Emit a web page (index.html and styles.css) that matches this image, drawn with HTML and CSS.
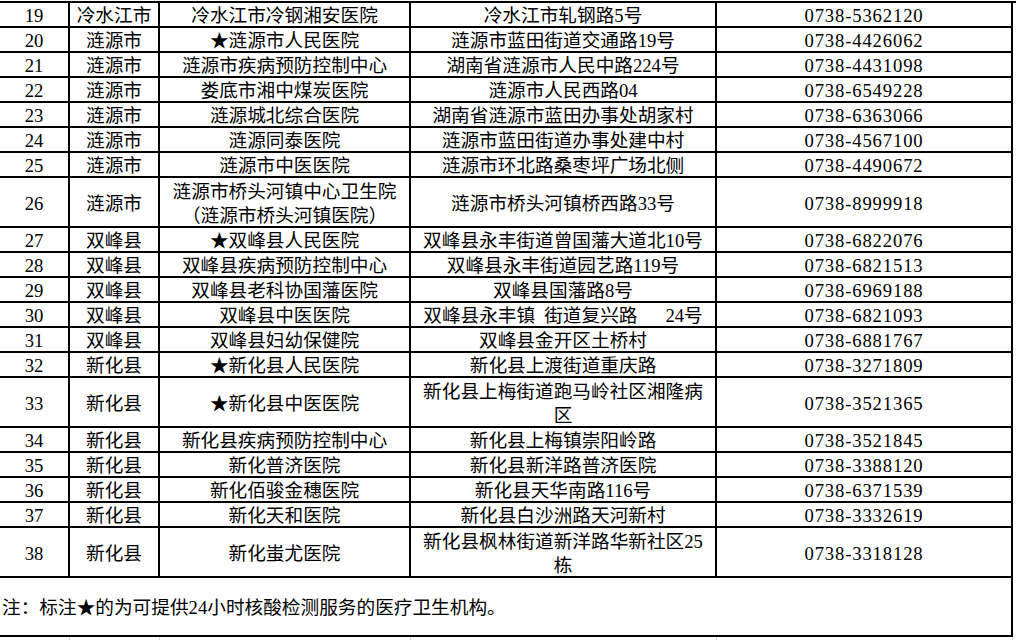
FILE: index.html
```html
<!DOCTYPE html>
<html lang="zh-CN">
<head>
<meta charset="utf-8">
<title>医疗机构名单</title>
<link rel="stylesheet" href="styles.css">
</head>
<body>
<div class="sheet">
  <div class="grid">
    <div class="c n">19</div><div class="c">冷水江市</div><div class="c">冷水江市冷钢湘安医院</div><div class="c">冷水江市轧钢路5号</div><div class="c p">0738-5362120</div>
    <div class="c n">20</div><div class="c">涟源市</div><div class="c">★涟源市人民医院</div><div class="c">涟源市蓝田街道交通路19号</div><div class="c p">0738-4426062</div>
    <div class="c n">21</div><div class="c">涟源市</div><div class="c">涟源市疾病预防控制中心</div><div class="c">湖南省涟源市人民中路224号</div><div class="c p">0738-4431098</div>
    <div class="c n">22</div><div class="c">涟源市</div><div class="c">娄底市湘中煤炭医院</div><div class="c">涟源市人民西路04</div><div class="c p">0738-6549228</div>
    <div class="c n">23</div><div class="c">涟源市</div><div class="c">涟源城北综合医院</div><div class="c">湖南省涟源市蓝田办事处胡家村</div><div class="c p">0738-6363066</div>
    <div class="c n">24</div><div class="c">涟源市</div><div class="c">涟源同泰医院</div><div class="c">涟源市蓝田街道办事处建中村</div><div class="c p">0738-4567100</div>
    <div class="c n">25</div><div class="c">涟源市</div><div class="c">涟源市中医医院</div><div class="c">涟源市环北路桑枣坪广场北侧</div><div class="c p">0738-4490672</div>
    <div class="c n tall">26</div><div class="c tall">涟源市</div><div class="c tall">涟源市桥头河镇中心卫生院<br>（涟源市桥头河镇医院）</div><div class="c tall">涟源市桥头河镇桥西路33号</div><div class="c p tall">0738-8999918</div>
    <div class="c n">27</div><div class="c">双峰县</div><div class="c">★双峰县人民医院</div><div class="c">双峰县永丰街道曾国藩大道北10号</div><div class="c p">0738-6822076</div>
    <div class="c n">28</div><div class="c">双峰县</div><div class="c">双峰县疾病预防控制中心</div><div class="c">双峰县永丰街道园艺路119号</div><div class="c p">0738-6821513</div>
    <div class="c n">29</div><div class="c">双峰县</div><div class="c">双峰县老科协国藩医院</div><div class="c">双峰县国藩路8号</div><div class="c p">0738-6969188</div>
    <div class="c n">30</div><div class="c">双峰县</div><div class="c">双峰县中医医院</div><div class="c">双峰县永丰镇<span class="sp"></span>街道复兴路<span class="sp3"></span>24号</div><div class="c p">0738-6821093</div>
    <div class="c n">31</div><div class="c">双峰县</div><div class="c">双峰县妇幼保健院</div><div class="c">双峰县金开区土桥村</div><div class="c p">0738-6881767</div>
    <div class="c n">32</div><div class="c">新化县</div><div class="c">★新化县人民医院</div><div class="c">新化县上渡街道重庆路</div><div class="c p">0738-3271809</div>
    <div class="c n tall">33</div><div class="c tall">新化县</div><div class="c tall">★新化县中医医院</div><div class="c tall">新化县上梅街道跑马岭社区湘隆病<br>区</div><div class="c p tall">0738-3521365</div>
    <div class="c n">34</div><div class="c">新化县</div><div class="c">新化县疾病预防控制中心</div><div class="c">新化县上梅镇崇阳岭路</div><div class="c p">0738-3521845</div>
    <div class="c n">35</div><div class="c">新化县</div><div class="c">新化普济医院</div><div class="c">新化县新洋路普济医院</div><div class="c p">0738-3388120</div>
    <div class="c n">36</div><div class="c">新化县</div><div class="c">新化佰骏金穗医院</div><div class="c">新化县天华南路116号</div><div class="c p">0738-6371539</div>
    <div class="c n">37</div><div class="c">新化县</div><div class="c">新化天和医院</div><div class="c">新化县白沙洲路天河新村</div><div class="c p">0738-3332619</div>
    <div class="c n tall">38</div><div class="c tall">新化县</div><div class="c tall">新化蚩尤医院</div><div class="c tall">新化县枫林街道新洋路华新社区25<br>栋</div><div class="c p tall">0738-3318128</div>
    <div class="c note">注：标注★的为可提供24小时核酸检测服务的医疗卫生机构。</div>
    <div class="g"></div><div class="g"></div><div class="g"></div><div class="g"></div><div class="g"></div>
  </div>
</div>
</body>
</html>
```

FILE: styles.css
```css
html, body {
  margin: 0;
  padding: 0;
  background: #ffffff;
}

.sheet {
  width: 1016px;
  height: 640px;
  overflow: hidden;
  padding-top: 1px;
  box-sizing: border-box;
}

.grid {
  display: grid;
  grid-template-columns: 70px 90px 251px 306px 296px;
  border-top: 2px solid #000;
  font-family: "Liberation Serif", "Noto Sans CJK SC", serif;
  font-size: 18.67px;
  color: #000;
}

.c {
  box-sizing: border-box;
  height: 25px;
  border-right: 2px solid #000;
  border-bottom: 2px solid #000;
  display: flex;
  align-items: center;
  justify-content: center;
  text-align: center;
  white-space: nowrap;
  line-height: 24px;
  padding-top: 3px;
}

.c.tall {
  height: 50px;
}

.p {
  letter-spacing: 0.85px;
}

.sp {
  display: inline-block;
  width: 9px;
}

.sp3 {
  display: inline-block;
  width: 28px;
}

.note {
  grid-column: 1 / -1;
  height: 59px;
  justify-content: flex-start;
  padding-left: 2px;
}

.g {
  height: 12px;
  border-right: 1px solid #d6d6d6;
}
```
